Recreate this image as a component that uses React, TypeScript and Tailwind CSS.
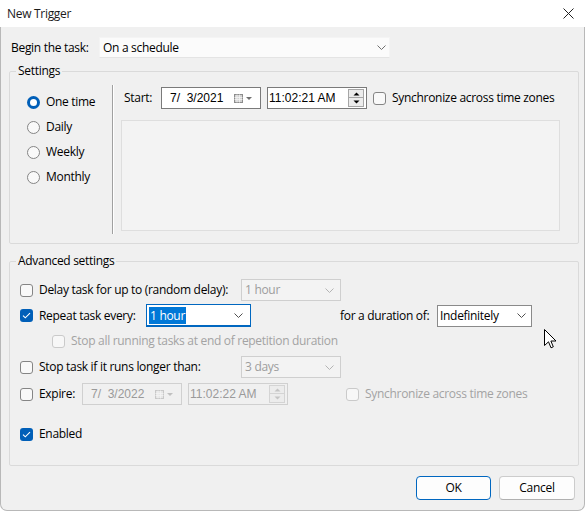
import React from "react";

const Chevron = ({ color = "#606060" }: { color?: string }) => (
  <svg width="9" height="5" viewBox="0 0 9 5" className="shrink-0">
    <path d="M0.5 0.5 L4.5 4.5 L8.5 0.5" fill="none" stroke={color} strokeWidth="1" />
  </svg>
);

const CheckBox = ({ checked = false, disabled = false }: { checked?: boolean; disabled?: boolean }) =>
  checked ? (
    <div className="w-[13px] h-[13px] rounded-[3px] bg-[#005fb8] flex items-center justify-center shrink-0">
      <svg width="9" height="7" viewBox="0 0 9 7">
        <path d="M1 3.6 L3.3 5.8 L8 1.2" fill="none" stroke="white" strokeWidth="1.1" />
      </svg>
    </div>
  ) : (
    <div
      className={
        disabled
          ? "w-[13px] h-[13px] rounded-[3px] border border-[#cacaca] bg-[#f7f7f7] shrink-0"
          : "w-[13px] h-[13px] rounded-[3px] border border-[#858585] bg-[#f9f9f9] shrink-0"
      }
    />
  );

const Radio = ({ checked = false }: { checked?: boolean }) =>
  checked ? (
    <div className="w-[13px] h-[13px] rounded-full bg-[#005fb8] flex items-center justify-center shrink-0">
      <div className="w-[7px] h-[7px] rounded-full bg-white" />
    </div>
  ) : (
    <div className="w-[13px] h-[13px] rounded-full border border-[#858585] bg-[#f9f9f9] shrink-0" />
  );

const CalIcon = ({ disabled = false }: { disabled?: boolean }) => {
  const c = disabled ? "#c8c8c8" : "#8c8c8c";
  const f = disabled ? "#e6e6e6" : "#d2d2d2";
  return (
    <svg width="19" height="9" viewBox="0 0 19 9" className="shrink-0">
      <rect x="0.5" y="0.5" width="8" height="8" fill={f} stroke={c} />
      <path d="M0.5 3.5 H8.5 M0.5 5.5 H8.5 M3 0.5 V8.5 M5.5 0.5 V8.5" stroke="#f4f4f4" strokeWidth="0.8" />
      <path d="M12 3 L18 3 L15 6 Z" fill={disabled ? "#c0c0c0" : "#707070"} />
    </svg>
  );
};

const Spinner = ({ disabled = false }: { disabled?: boolean }) => {
  const b = disabled ? "border-[#d4d4d4]" : "border-[#a6a6a6]";
  const t = disabled ? "#c4c4c4" : "#000";
  return (
    <div className="flex flex-col w-[16px] h-[18px] mr-[2px] shrink-0">
      <div className={`h-[9px] border ${b} bg-[#ececec] flex items-center justify-center`}>
        <svg width="7" height="4" viewBox="0 0 7 4">
          <path d="M0.5 3.5 L3.5 0.5 L6.5 3.5 Z" fill={t} />
        </svg>
      </div>
      <div className={`h-[9px] border border-t-0 ${b} bg-[#ececec] flex items-center justify-center`}>
        <svg width="7" height="4" viewBox="0 0 7 4">
          <path d="M0.5 0.5 L3.5 3.5 L6.5 0.5 Z" fill={t} />
        </svg>
      </div>
    </div>
  );
};

const DateBox = ({ value, disabled = false }: { value: string; disabled?: boolean }) => (
  <div
    className={`w-[100px] h-[22px] flex items-center justify-between pl-[8px] pr-[7px] border tracking-normal ${
      disabled ? "border-[#d0d0d0] bg-[#f0f0f0] text-[#9a9a9a]" : "border-[#7a7a7a] bg-white text-black"
    } shrink-0`}
    style={{ fontFamily: '"Liberation Sans", Arial, sans-serif' }}
  >
    <span className="text-[12px] whitespace-pre">{value}</span>
    <CalIcon disabled={disabled} />
  </div>
);

const TimeBox = ({ value, disabled = false }: { value: string; disabled?: boolean }) => (
  <div
    className={`w-[100px] h-[22px] flex items-center justify-between pl-[1px] border tracking-normal ${
      disabled ? "border-[#d0d0d0] bg-[#f0f0f0] text-[#9a9a9a]" : "border-[#7a7a7a] bg-white text-black"
    } shrink-0`}
    style={{ fontFamily: '"Liberation Sans", Arial, sans-serif' }}
  >
    <span className="text-[12px] whitespace-pre">{value}</span>
    <Spinner disabled={disabled} />
  </div>
);

const DisabledSelect = ({ value }: { value: string }) => (
  <div className="w-[100px] h-[22px] flex items-center justify-between pl-[3px] pr-[6px] border border-[#cfcfcf] bg-[#f3f3f3] text-[#9d9d9d] shrink-0">
    <span>{value}</span>
    <Chevron color="#b4b4b4" />
  </div>
);

export default function App() {
  return (
    <div
      className="relative w-[585px] h-[512px] bg-white text-[12px] leading-[16px] tracking-[-0.3px] text-black overflow-hidden"
      style={{ fontFamily: '"Open Sans", "Noto Sans", sans-serif' }}
    >
      {/* Title bar */}
      <div className="h-[27px] flex items-center justify-between pl-[7px] pr-[11px] bg-white">
        <span className="text-[12px] text-[#1a1a1a]">New Trigger</span>
        <svg width="11" height="11" viewBox="0 0 11 11">
          <path d="M0.5 0.5 L10.5 10.5 M10.5 0.5 L0.5 10.5" stroke="#202020" strokeWidth="1" />
        </svg>
      </div>

      {/* Body */}
      <div className="h-[484px] bg-[#f0f0f0] border-b border-x border-[#b8b8b8] rounded-b-[7px] flex flex-col">
        {/* Begin the task */}
        <div className="mt-[10px] h-[21px] flex items-center">
          <span className="ml-[10px] w-[88px]">Begin the task:</span>
          <div className="w-[291px] h-[21px] bg-[#fbfbfb] border border-[#f4f4f4] border-b-[#e4e4e4] flex items-center justify-between pl-[3px] pr-[3px]">
            <span>On a schedule</span>
            <Chevron color="#707070" />
          </div>
        </div>

        {/* Settings */}
        <fieldset className="mt-[5px] ml-[8px] w-[570px] border border-[#dadada] rounded-[2px] p-0">
          <legend className="ml-[6px] px-[2px] leading-[16px]">Settings</legend>
          <div className="h-[164px] flex pt-[6px]">
            <div className="w-[102px] flex flex-col gap-[9px] pl-[17px] pt-[9px]">
              <div className="h-[16px] flex items-center gap-[6px]">
                <Radio checked />
                <span>One time</span>
              </div>
              <div className="h-[16px] flex items-center gap-[6px]">
                <Radio />
                <span>Daily</span>
              </div>
              <div className="h-[16px] flex items-center gap-[6px]">
                <Radio />
                <span>Weekly</span>
              </div>
              <div className="h-[16px] flex items-center gap-[6px]">
                <Radio />
                <span>Monthly</span>
              </div>
            </div>
            <div className="w-[1px] h-[149px] bg-[#a0a0a0]" />
            <div className="w-[1px] h-[149px] bg-white" />
            <div className="flex flex-col pl-[7px] pt-[2px]">
              <div className="h-[22px] flex items-center">
                <span className="ml-[3px] w-[37px]">Start:</span>
                <DateBox value="7/  3/2021" />
                <div className="ml-[6px]">
                  <TimeBox value="11:02:21 AM" />
                </div>
                <div className="ml-[6px] flex items-center gap-[6px]">
                  <CheckBox />
                  <span>Synchronize across time zones</span>
                </div>
              </div>
              <div className="mt-[11px] w-[439px] h-[111px] border border-[#dedede] bg-[#f3f3f3]" />
            </div>
          </div>
        </fieldset>

        {/* Advanced settings */}
        <fieldset className="mt-[9px] ml-[8px] w-[570px] border border-[#dadada] rounded-[2px] p-0">
          <legend className="ml-[6px] px-[2px] leading-[16px]">Advanced settings</legend>
          <div className="h-[196px] flex flex-col pl-[10px] pt-[10px]">
            {/* Delay */}
            <div className="h-[22px] flex items-center">
              <div className="w-[221px] flex items-center gap-[6px]">
                <CheckBox />
                <span>Delay task for up to (random delay):</span>
              </div>
              <DisabledSelect value="1 hour" />
            </div>
            {/* Repeat */}
            <div className="mt-[3px] h-[23px] flex items-center">
              <div className="w-[126px] flex items-center gap-[6px]">
                <CheckBox checked />
                <span>Repeat task every:</span>
              </div>
              <div className="w-[105px] h-[23px] border border-[#0067c0] border-b-2 bg-white flex items-center justify-between pl-[2px] pr-[7px]">
                <span className="bg-[#0078d7] text-white px-[1px] leading-[17px]">1 hour</span>
                <Chevron color="#505050" />
              </div>
              <span className="ml-[89px] w-[97px]">for a duration of:</span>
              <div className="w-[95px] h-[22px] border border-[#8a8a8a] bg-white flex items-center justify-between pl-[2px] pr-[5px]">
                <span>Indefinitely</span>
                <Chevron color="#505050" />
              </div>
            </div>
            {/* Stop all running */}
            <div className="mt-[6px] h-[16px] flex items-center gap-[6px] ml-[32px] text-[#a3a3a3]">
              <CheckBox disabled />
              <span>Stop all running tasks at end of repetition duration</span>
            </div>
            {/* Stop task */}
            <div className="mt-[7px] h-[22px] flex items-center">
              <div className="w-[221px] flex items-center gap-[6px]">
                <CheckBox />
                <span>Stop task if it runs longer than:</span>
              </div>
              <DisabledSelect value="3 days" />
            </div>
            {/* Expire */}
            <div className="mt-[5px] h-[22px] flex items-center">
              <div className="w-[62px] flex items-center gap-[6px]">
                <CheckBox />
                <span>Expire:</span>
              </div>
              <DateBox value="7/  3/2022" disabled />
              <div className="ml-[6px]">
                <TimeBox value="11:02:22 AM" disabled />
              </div>
              <div className="ml-[58px] flex items-center gap-[6px] text-[#a3a3a3]">
                <CheckBox disabled />
                <span>Synchronize across time zones</span>
              </div>
            </div>
            {/* Enabled */}
            <div className="mt-[21px] h-[16px] flex items-center gap-[6px]">
              <CheckBox checked />
              <span>Enabled</span>
            </div>
          </div>
        </fieldset>

        {/* Buttons */}
        <div className="mt-[10px] flex justify-end gap-[8px] mr-[9px]">
          <button className="w-[75px] h-[24px] rounded-[4px] border border-[#0067c0] bg-[#fdfdfd] text-black">
            OK
          </button>
          <button className="w-[76px] h-[24px] rounded-[4px] border border-[#cccccc] border-b-[#b0b0b0] bg-[#fdfdfd] text-black">
            Cancel
          </button>
        </div>
      </div>

      {/* Mouse cursor */}
      <svg className="absolute left-[544px] top-[329px]" width="13" height="20" viewBox="0 0 13 20">
        <path
          d="M0.5 0.5 L0.5 16.5 L4.5 12.8 L7 18.8 L9.3 17.8 L6.9 12 L12 12 Z"
          fill="white"
          stroke="black"
          strokeWidth="1"
          strokeLinejoin="miter"
        />
      </svg>
    </div>
  );
}
